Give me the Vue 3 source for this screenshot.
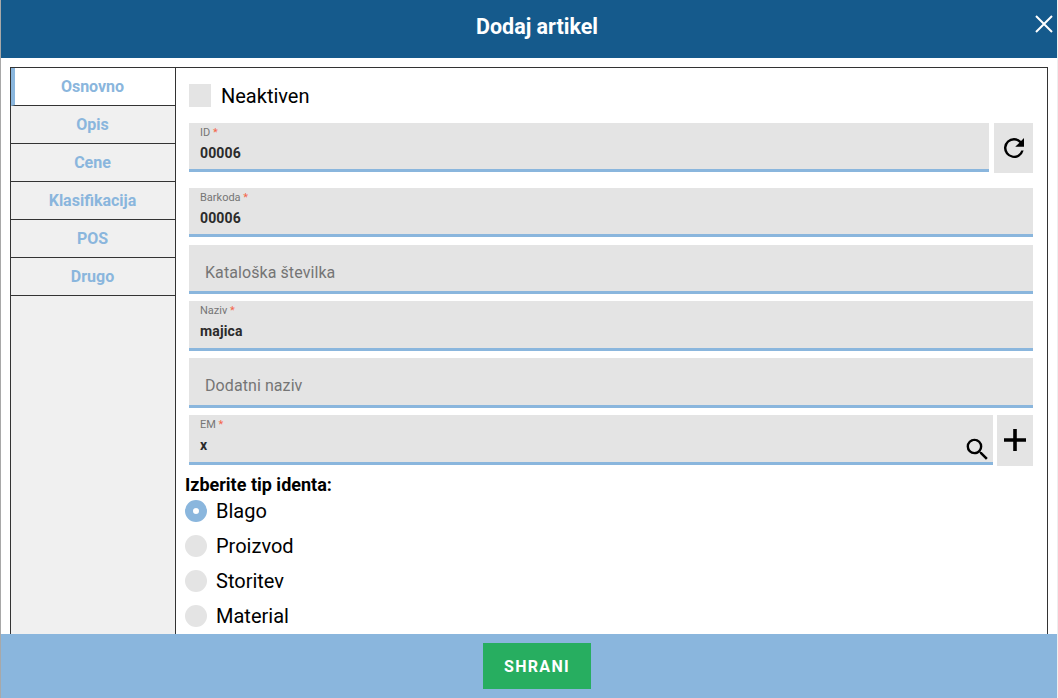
<script setup>
const tabs = ['Osnovno', 'Opis', 'Cene', 'Klasifikacija', 'POS', 'Drugo']
const types = ['Blago', 'Proizvod', 'Storitev', 'Material']
</script>

<template>
  <div class="modal">
    <header class="head">
      <h1>Dodaj artikel</h1>
      <button class="close" type="button" aria-label="Zapri">
        <svg width="20" height="20" viewBox="0 0 20 20"><path d="M2 2 L18 18 M18 2 L2 18" stroke="#fff" stroke-width="2" fill="none" /></svg>
      </button>
    </header>

    <div class="body">
      <div class="box">
        <nav class="tabs">
          <div v-for="(tab, i) in tabs" :key="tab" class="tab" :class="{ active: i === 0 }">{{ tab }}</div>
        </nav>

        <form class="form">
          <label class="check"><span class="check-box"></span>Neaktiven</label>

          <div class="row id-row">
            <div class="field filled">
              <span class="label">ID <i>*</i></span>
              <span class="value">00006</span>
            </div>
            <button class="side refresh" type="button" aria-label="Osveži">
              <svg width="30" height="30" viewBox="0 0 24 24"><path d="M17.65 6.35A7.96 7.96 0 0 0 12 4a8 8 0 1 0 7.73 10h-1.9A6.1 6.1 0 1 1 12 5.9c1.7 0 3.2.7 4.3 1.8L13 11h7V4l-2.35 2.35z" /></svg>
            </button>
          </div>

          <div class="field filled barcode">
            <span class="label">Barkoda <i>*</i></span>
            <span class="value">00006</span>
          </div>

          <div class="field empty catalog">Kataloška številka</div>

          <div class="field filled name">
            <span class="label">Naziv <i>*</i></span>
            <span class="value">majica</span>
          </div>

          <div class="field empty extra">Dodatni naziv</div>

          <div class="row em-row">
            <div class="field filled em">
              <span class="label">EM <i>*</i></span>
              <span class="value">x</span>
              <svg class="search" width="29" height="29" viewBox="0 0 24 24"><path d="M15.5 14h-.79l-.28-.27A6.47 6.47 0 0 0 16 9.5 6.5 6.5 0 1 0 9.5 16c1.61 0 3.09-.59 4.23-1.57l.27.28v.79l5 4.99L20.49 19l-4.99-5zm-6 0C7.01 14 5 11.99 5 9.5S7.01 5 9.5 5 14 7.01 14 9.5 11.99 14 9.5 14z" /></svg>
            </div>
            <button class="side plus" type="button" aria-label="Dodaj">
              <svg width="24" height="24" viewBox="0 0 24 24"><path d="M1 10.2h9.2V1h3.6v9.2H23v3.6h-9.2V23h-3.6v-9.2H1z" /></svg>
            </button>
          </div>

          <p class="type-title">Izberite tip identa:</p>
          <div v-for="(t, i) in types" :key="t" class="radio">
            <span class="dot" :class="{ on: i === 0 }"></span>{{ t }}
          </div>
        </form>
      </div>
    </div>

    <footer class="foot">
      <button class="save" type="button">SHRANI</button>
    </footer>
  </div>
</template>

<style scoped>
.modal {
  height: 698px;
  display: flex;
  flex-direction: column;
  overflow: hidden;
  background: #fff;
  border-left: 1px solid #a8a8a8;
  border-right: 1px solid #efefef;
  box-sizing: border-box;
  font-family: Roboto, sans-serif;
}

.head {
  flex: none;
  height: 58px;
  position: relative;
  box-sizing: border-box;
  padding: 0 0 5px 16px;
  background: #155a8c;
  color: #fff;
  display: flex;
  align-items: center;
  justify-content: center;
}

.head h1 {
  margin: 0;
  font-size: 21.5px;
  font-weight: 700;
}

.close {
  position: absolute;
  top: 14px;
  right: 3px;
  padding: 0;
  border: none;
  background: none;
  line-height: 0;
}

.body {
  flex: 1;
  min-height: 0;
  padding: 9px 9px 0;
  overflow: hidden;
}

.box {
  display: flex;
  min-height: 620px;
  border: 1px solid #333;
}

/* tabs */
.tabs {
  flex: none;
  width: 165px;
  box-sizing: border-box;
  background: #f0f0f0;
  border-right: 1px solid #333;
}

.tab {
  height: 38px;
  box-sizing: border-box;
  padding: 9px 1px 0 0;
  border-bottom: 1px solid #333;
  text-align: center;
  font-size: 16px;
  line-height: 19px;
  font-weight: 700;
  color: #8ab6dd;
}

.tab.active {
  background: #fff;
  border-left: 4px solid #8ab6dd;
  padding-right: 5px;
}

/* form */
.form {
  flex: 1;
  min-width: 0;
  padding: 16px 14px 0 13px;
}

.check {
  display: flex;
  align-items: center;
  height: 23px;
  font-size: 20px;
  color: #000;
}

.check-box {
  width: 22px;
  height: 23px;
  margin-right: 10px;
  background: #e4e4e4;
}

.row {
  display: flex;
}

.id-row {
  gap: 5px;
  margin-top: 16px;
}

.field {
  box-sizing: border-box;
  background: #e4e4e4;
  border-bottom: 3px solid #8ab6dd;
  height: 49px;
}

.filled {
  display: flex;
  flex-direction: column;
  padding: 4px 11px 0;
  position: relative;
}

.id-row .field {
  flex: 1;
  height: 49px;
}

.barcode {
  margin-top: 15px;
}

.catalog {
  margin-top: 8px;
}

.name {
  margin-top: 7px;
  height: 50px;
}

.extra {
  margin-top: 7px;
  height: 50px;
}

.empty {
  padding: 18px 16px 0;
  font-size: 16px;
  line-height: 20px;
  letter-spacing: 0.08px;
  color: #757575;
}

.label {
  font-size: 11px;
  line-height: 12px;
  color: #757575;
}

.label i {
  font-style: normal;
  color: #f4664a;
}

.value {
  margin-top: 5px;
  font-size: 14px;
  line-height: 18px;
  font-weight: 700;
  letter-spacing: 0.15px;
  color: #2b2b2b;
}

.side {
  flex: none;
  padding: 0;
  border: none;
  background: #e4e4e4;
  display: flex;
  align-items: center;
  justify-content: center;
}

.refresh {
  width: 39px;
  height: 50px;
}

.em-row {
  gap: 4px;
  margin-top: 7px;
}

.em {
  flex: 1;
  height: 50px;
}

.search {
  position: absolute;
  right: 1px;
  bottom: -2px;
}

.plus {
  width: 36px;
  height: 51px;
  padding-bottom: 1px;
}

.type-title {
  margin: 11px 0 0 -4px;
  font-size: 18px;
  line-height: 16px;
  font-weight: 700;
  color: #000;
}

.radio {
  display: flex;
  align-items: center;
  height: 35px;
  margin-left: -4px;
  font-size: 20px;
  color: #000;
}

.dot {
  width: 22px;
  height: 22px;
  margin-right: 9px;
  border-radius: 50%;
  background: #e4e4e4;
  box-sizing: border-box;
}

.dot.on {
  background: #fff;
  border: 8px solid #8ab6dd;
}

.foot {
  flex: none;
  height: 64px;
  background: #8ab6dd;
  display: flex;
  justify-content: center;
  padding: 9px 0 0 16px;
  box-sizing: border-box;
  margin: 0 -1px;
  position: relative;
}

.save {
  width: 108px;
  height: 46px;
  border: none;
  background: #27ae60;
  color: #fff;
  font-family: Roboto, sans-serif;
  font-size: 16px;
  font-weight: 700;
  letter-spacing: 1.3px;
}
</style>
